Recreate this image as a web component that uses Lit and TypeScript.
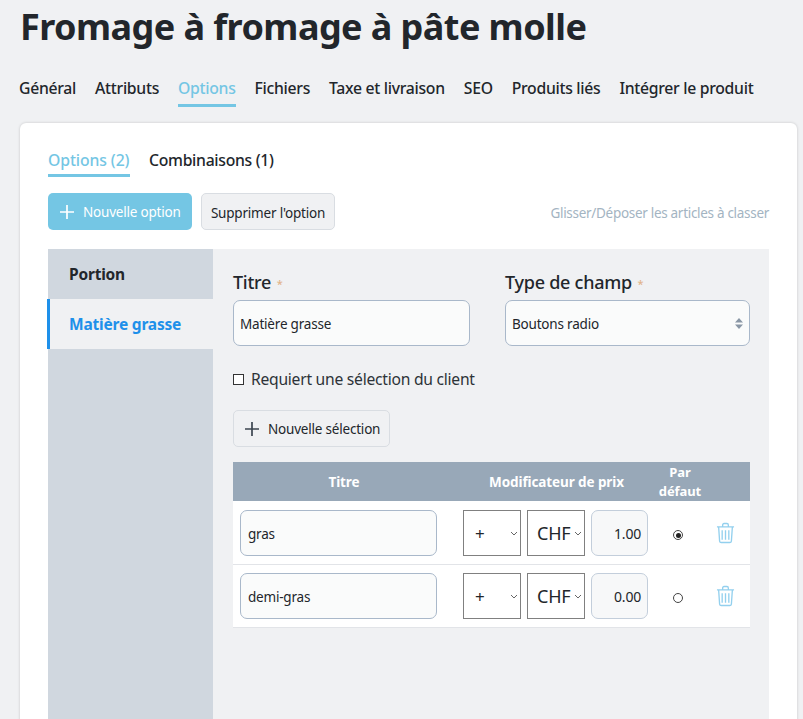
import { LitElement, html, css, svg } from "lit";
import { customElement } from "lit/decorators.js";

const plus = (c: string) => html`<svg class="plus" viewBox="0 0 16 16" width="16" height="16"><path d="M8 1v14M1 8h14" stroke=${c} stroke-width="1.7" fill="none"/></svg>`;
const chev = html`<svg class="chev" viewBox="0 0 8 5" width="8" height="5"><path d="M1 1l3 3 3-3" stroke="#666" stroke-width="1" fill="none"/></svg>`;
const trash = html`<svg class="trash" viewBox="0 0 20 22" width="19" height="22" fill="none" stroke="#93d0ee" stroke-width="1.4">
  <path d="M1 4.500h18M7 4V2.500Q7 1 8.500 1h3Q13 1 13 2.500V4M2.800 5l1 14.500Q4 21 5.500 21h9q1.500 0 1.700-1.500l1-14.500"/>
  ${svg`<path d="M6.500 8v10M10 8v10M13.500 8v10"/>`}
</svg>`;

@customElement("app-root")
export class AppRoot extends LitElement {
  static styles = css`
    :host { display: block; height: 719px; overflow: hidden; background: #f0f1f3; color: #22262b;
      font-family: "Noto Sans", "Open Sans", sans-serif; font-size: 14px; }
    h1 { margin: 0; padding: 4px 0 0 20px; height: 46px; font-size: 36px; line-height: 46px; font-weight: 700; letter-spacing: -0.56px; white-space: nowrap; }
    .tabs { display: flex; gap: 19px; padding: 26px 0 0 19px; height: 34px; font-size: 15.750px; font-weight: 500; letter-spacing: -0.29px; }
    .tab { height: 31px; line-height: 24px; white-space: nowrap; }
    .tab.on { color: #74c6e4; border-bottom: 3px solid #74c6e4; height: 28px; }
    .card { margin: 13px 6px 0 20px; height: 640px; box-sizing: border-box; background: #fff; border-radius: 6px;
      box-shadow: 0 0 3px rgba(0,0,0,.18); padding: 25px 28px 0 28px; }
    .sub { display: flex; gap: 19px; height: 29px; font-size: 15.750px; font-weight: 500; letter-spacing: -0.3px; }
    .sub div { height: 26px; line-height: 24px; white-space: nowrap; }
    .sub .on { width: 82px; letter-spacing: -0.1px; color: #74c6e4; border-bottom: 3px solid #74c6e4; height: 26px; }
    .actions { display: flex; align-items: flex-start; gap: 9px; margin-top: 16px; height: 39px; }
    .btn { display: flex; align-items: center; box-sizing: border-box; border-radius: 5px; white-space: nowrap; letter-spacing: -0.2px; }
    .primary { width: 144px; height: 37px; background: #74c6e4; color: #fff; padding-left: 11px; gap: 8px; font-size: 13.500px; }
    .ghost { height: 37px; width: 134px; justify-content: center; background: #f0f1f3; border: 1px solid #d9dde2; font-size: 13.500px; padding-top: 2px; }
    .hint { margin-left: auto; color: #a3b4c2; font-size: 13.500px; letter-spacing: -0.3px; white-space: nowrap; line-height: 41px; }
    .panel { display: flex; margin-top: 17px; height: 480px; background: #f0f1f3; }
    .side { width: 165px; flex: none; background: #d0d7df; font-size: 15.500px; font-weight: 700; letter-spacing: -0.2px; }
    .side div { height: 50px; line-height: 51px; padding-left: 21px; box-sizing: border-box; white-space: nowrap; }
    .side .on { background: #f0f1f3; color: #1e90ea; border-left: 3px solid #1e90ea; padding-left: 19px; margin-left: -1px; width: 166px; }
    .main { flex: 1; padding: 20px 19px 0 20px; min-width: 0; }
    .fields { display: flex; gap: 35px; }
    .field { display: flex; flex-direction: column; }
    .label { font-size: 18px; font-weight: 500; height: 31px; line-height: 27px; letter-spacing: -0.25px; white-space: nowrap; }
    .label i { font-style: normal; color: #e2b48a; font-size: 11px; margin-left: 1px; vertical-align: 1px; }
    .box { box-sizing: border-box; height: 46px; border: 1px solid #a9b8ca; border-radius: 7px; background: #fafbfb;
      display: flex; align-items: center; padding: 1px 6px 0 7px; font-size: 13.500px; letter-spacing: -0.2px; white-space: nowrap; position: relative; }
    .t1 { width: 237px; padding-left: 6px; }
    .t2 { width: 245px; padding-left: 6px; }
    .updown { margin-left: auto; margin-right: 0; }
    .check { display: flex; align-items: center; gap: 7px; margin-top: 21px; height: 24px; font-size: 15.650px; letter-spacing: -0.25px; color: #2d3338; white-space: nowrap; }
    .check span { width: 9px; height: 9px; border: 1px solid #333; background: #fff; margin-left: 0; }
    .add { margin-top: 19px; width: 157px; height: 37px; background: #f0f1f3; border: 1px solid #d9dde2; padding-left: 10px; gap: 8px; font-size: 13.500px; }
    .head { display: grid; grid-template-columns: 222px 203px 92px; margin-top: 15px; height: 39px; background: #98a8b8; color: #fff;
      font-weight: 700; font-size: 13.500px; letter-spacing: -0.1px; text-align: center; align-items: center; white-space: nowrap; }
    .head .d { line-height: 18.500px; width: 50px; justify-self: start; margin-left: -3px; font-size: 13px; }
    .row { display: flex; align-items: center; height: 64px; box-sizing: border-box; background: #fff; border-bottom: 1px solid #e2e4e8; padding-left: 7px; padding-top: 1px; }
    .row + .row { height: 63px; padding-top: 0; }
    .row .name { width: 197px; }
    .sel { box-sizing: border-box; height: 46px; border: 1px solid #808080; background: #fff; display: flex; align-items: center; position: relative; white-space: nowrap; }
    .sign { width: 58px; margin-left: 26px; padding-left: 11px; font-size: 17px; }
    .cur { width: 58px; margin-left: 6px; padding-left: 9px; font-size: 18px; letter-spacing: -0.2px; }
    .chev { position: absolute; right: 2px; top: 20px; }
    .num { width: 57px; margin-left: 6px; justify-content: flex-end; padding: 0 6px; background: #f7f8f9; border-color: #c3cedb; font-size: 14px; }
    .radio { width: 8px; height: 8px; border-radius: 50%; border: 1px solid #444; background: #fff; margin-left: 25px; flex: none; position: relative; margin-top: 4px; }
    .radio.on::after { content: ""; position: absolute; inset: 1.500px; border-radius: 50%; background: #222; }
    .trash { margin-left: 33px; flex: none; }
  `;

  row(name: string, val: string, on: boolean) {
    return html`<div class="row">
      <div class="box name">${name}</div>
      <div class="sel sign">+${chev}</div>
      <div class="sel cur">CHF${chev}</div>
      <div class="box num">${val}</div>
      <div class="radio ${on ? "on" : ""}"></div>
      ${trash}
    </div>`;
  }

  render() {
    const tabs = ["Général", "Attributs", "Options", "Fichiers", "Taxe et livraison", "SEO", "Produits liés", "Intégrer le produit"];
    return html`
      <h1>Fromage à fromage à pâte molle</h1>
      <div class="tabs">${tabs.map((t) => html`<div class="tab ${t === "Options" ? "on" : ""}">${t}</div>`)}</div>
      <div class="card">
        <div class="sub"><div class="on">Options (2)</div><div>Combinaisons (1)</div></div>
        <div class="actions">
          <div class="btn primary">${plus("#fff")}Nouvelle option</div>
          <div class="btn ghost">Supprimer l'option</div>
          <div class="hint">Glisser/Déposer les articles à classer</div>
        </div>
        <div class="panel">
          <div class="side"><div>Portion</div><div class="on">Matière grasse</div></div>
          <div class="main">
            <div class="fields">
              <div class="field"><div class="label">Titre <i>*</i></div><div class="box t1">Matière grasse</div></div>
              <div class="field"><div class="label">Type de champ <i>*</i></div>
                <div class="box t2">Boutons radio
                  <svg class="updown" viewBox="0 0 8 11" width="8" height="11"><path d="M4 0l4 4.500H0zM4 11l4-4.500H0z" fill="#8a97a6"/></svg>
                </div></div>
            </div>
            <div class="check"><span></span>Requiert une sélection du client</div>
            <div class="btn add">${plus("#3c4650")}Nouvelle sélection</div>
            <div class="head"><div>Titre</div><div>Modificateur de prix</div><div class="d">Par<br />défaut</div></div>
            ${this.row("gras", "1.00", true)}
            ${this.row("demi-gras", "0.00", false)}
          </div>
        </div>
      </div>
    `;
  }
}
